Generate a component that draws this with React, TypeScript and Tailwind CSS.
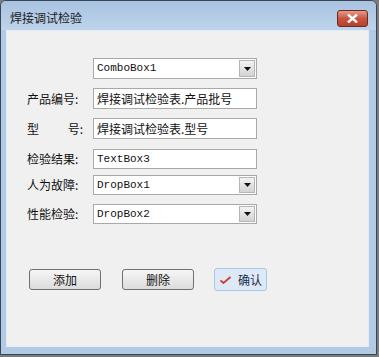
import React from 'react';

const cjk = '"Noto Sans CJK SC", "Liberation Sans", sans-serif';
const mono = '"Liberation Mono", "Courier New", monospace';

const DropArrow: React.FC = () => (
  <div className="w-[16px] h-full border border-[#b5b5b5] bg-gradient-to-b from-[#f3f3f3] to-[#d3d3d3] flex items-center justify-center">
    <svg width="7" height="4" viewBox="0 0 7 4">
      <path d="M0 0 L7 0 L3.5 4 Z" fill="#111" />
    </svg>
  </div>
);

type FieldProps = {
  value: string;
  drop?: boolean;
  latin?: boolean;
  h: string;
};

const Field: React.FC<FieldProps> = ({ value, drop, latin, h }) => (
  <div className={`w-[164px] shrink-0 ${h} bg-white border border-[#a9a9a9] flex items-center`}>
    <span
      className={`flex-1 pl-[3px] text-[#111] whitespace-nowrap overflow-hidden ${latin ? 'text-[11px]' : 'text-[12px]'}`}
      style={{ fontFamily: latin ? mono : cjk }}
    >
      {value}
    </span>
    {drop && (
      <div className="h-full py-[1px] pr-[1px]">
        <DropArrow />
      </div>
    )}
  </div>
);

const Label: React.FC<{ children: React.ReactNode }> = ({ children }) => (
  <div className="w-[86px] shrink-0 pl-[20px] text-[12px] text-[#111] leading-none whitespace-nowrap" style={{ fontFamily: cjk }}>
    {children}
  </div>
);

const App: React.FC = () => {
  return (
    <div className="w-[379px] h-[357px] bg-[#7b7b7b]">
      <div className="w-[377px] h-[355px] border border-[#3a4656] rounded-t-[6px] bg-[#b1cae6] flex flex-col overflow-hidden">
        {/* title bar */}
        <div className="h-[29px] bg-gradient-to-b from-[#a8c2e0] to-[#bfd4ec] flex items-start justify-between">
          <span className="pl-[9px] pt-[11px] text-[12px] leading-none text-[#1a1a1a]" style={{ fontFamily: cjk }}>
            焊接调试检验
          </span>
          <div className="mt-[9px] mr-[8px] w-[31px] h-[17px] rounded-[3px] border border-[#6b2a22] bg-gradient-to-b from-[#e59a8a] via-[#c8553f] to-[#b9412c] flex items-center justify-center">
            <svg width="11" height="9" viewBox="0 0 11 9">
              <path d="M1 0.5 L10 8.5 M10 0.5 L1 8.5" stroke="#fff" strokeWidth="2.4" />
            </svg>
          </div>
        </div>

        {/* client area */}
        <div className="flex-1 ml-[5px] mr-[7px] mb-[7px] bg-[#f0f0f0] border border-[#e3ebf5] flex flex-col">
          <div className="mt-[27px] pl-[86px]">
            <Field value="ComboBox1" drop latin h="h-[21px]" />
          </div>

          <div className="mt-[9px] flex items-center">
            <Label>产品编号:</Label>
            <Field value="焊接调试检验表.产品批号" h="h-[21px]" />
          </div>

          <div className="mt-[9px] flex items-center">
            <Label>
              <div className="w-[56px] flex justify-between">
                <span>型</span>
                <span>号:</span>
              </div>
            </Label>
            <Field value="焊接调试检验表.型号" h="h-[21px]" />
          </div>

          <div className="mt-[10px] flex items-center">
            <Label>检验结果:</Label>
            <Field value="TextBox3" latin h="h-[20px]" />
          </div>

          <div className="mt-[6px] flex items-center">
            <Label>人为故障:</Label>
            <Field value="DropBox1" drop latin h="h-[20px]" />
          </div>

          <div className="mt-[9px] flex items-center">
            <Label>性能检验:</Label>
            <Field value="DropBox2" drop latin h="h-[20px]" />
          </div>

          <div className="mt-[44px] pl-[22px] flex items-center">
            <button
              className="w-[72px] h-[21px] rounded-[3px] border border-[#707070] bg-gradient-to-b from-[#f6f6f6] to-[#dcdcdc] text-[12px] text-[#111] leading-none"
              style={{ fontFamily: cjk }}
            >
              添加
            </button>
            <button
              className="ml-[21px] w-[72px] h-[21px] rounded-[3px] border border-[#707070] bg-gradient-to-b from-[#f6f6f6] to-[#dcdcdc] text-[12px] text-[#111] leading-none"
              style={{ fontFamily: cjk }}
            >
              删除
            </button>
            <button
              className="ml-[20px] w-[53px] h-[23px] rounded-[3px] border border-[#a9c6e6] bg-[#dde9f7] flex items-center pl-[5px] gap-[7px] text-[12px] text-[#1b2c4a] leading-none"
              style={{ fontFamily: cjk }}
            >
              <svg width="11" height="8" viewBox="0 0 11 8">
                <path d="M0.5 4.5 L3.5 7 L10.5 1" stroke="#d23a2e" strokeWidth="1.8" fill="none" />
              </svg>
              确认
            </button>
          </div>
        </div>
      </div>
    </div>
  );
};

export default App;
